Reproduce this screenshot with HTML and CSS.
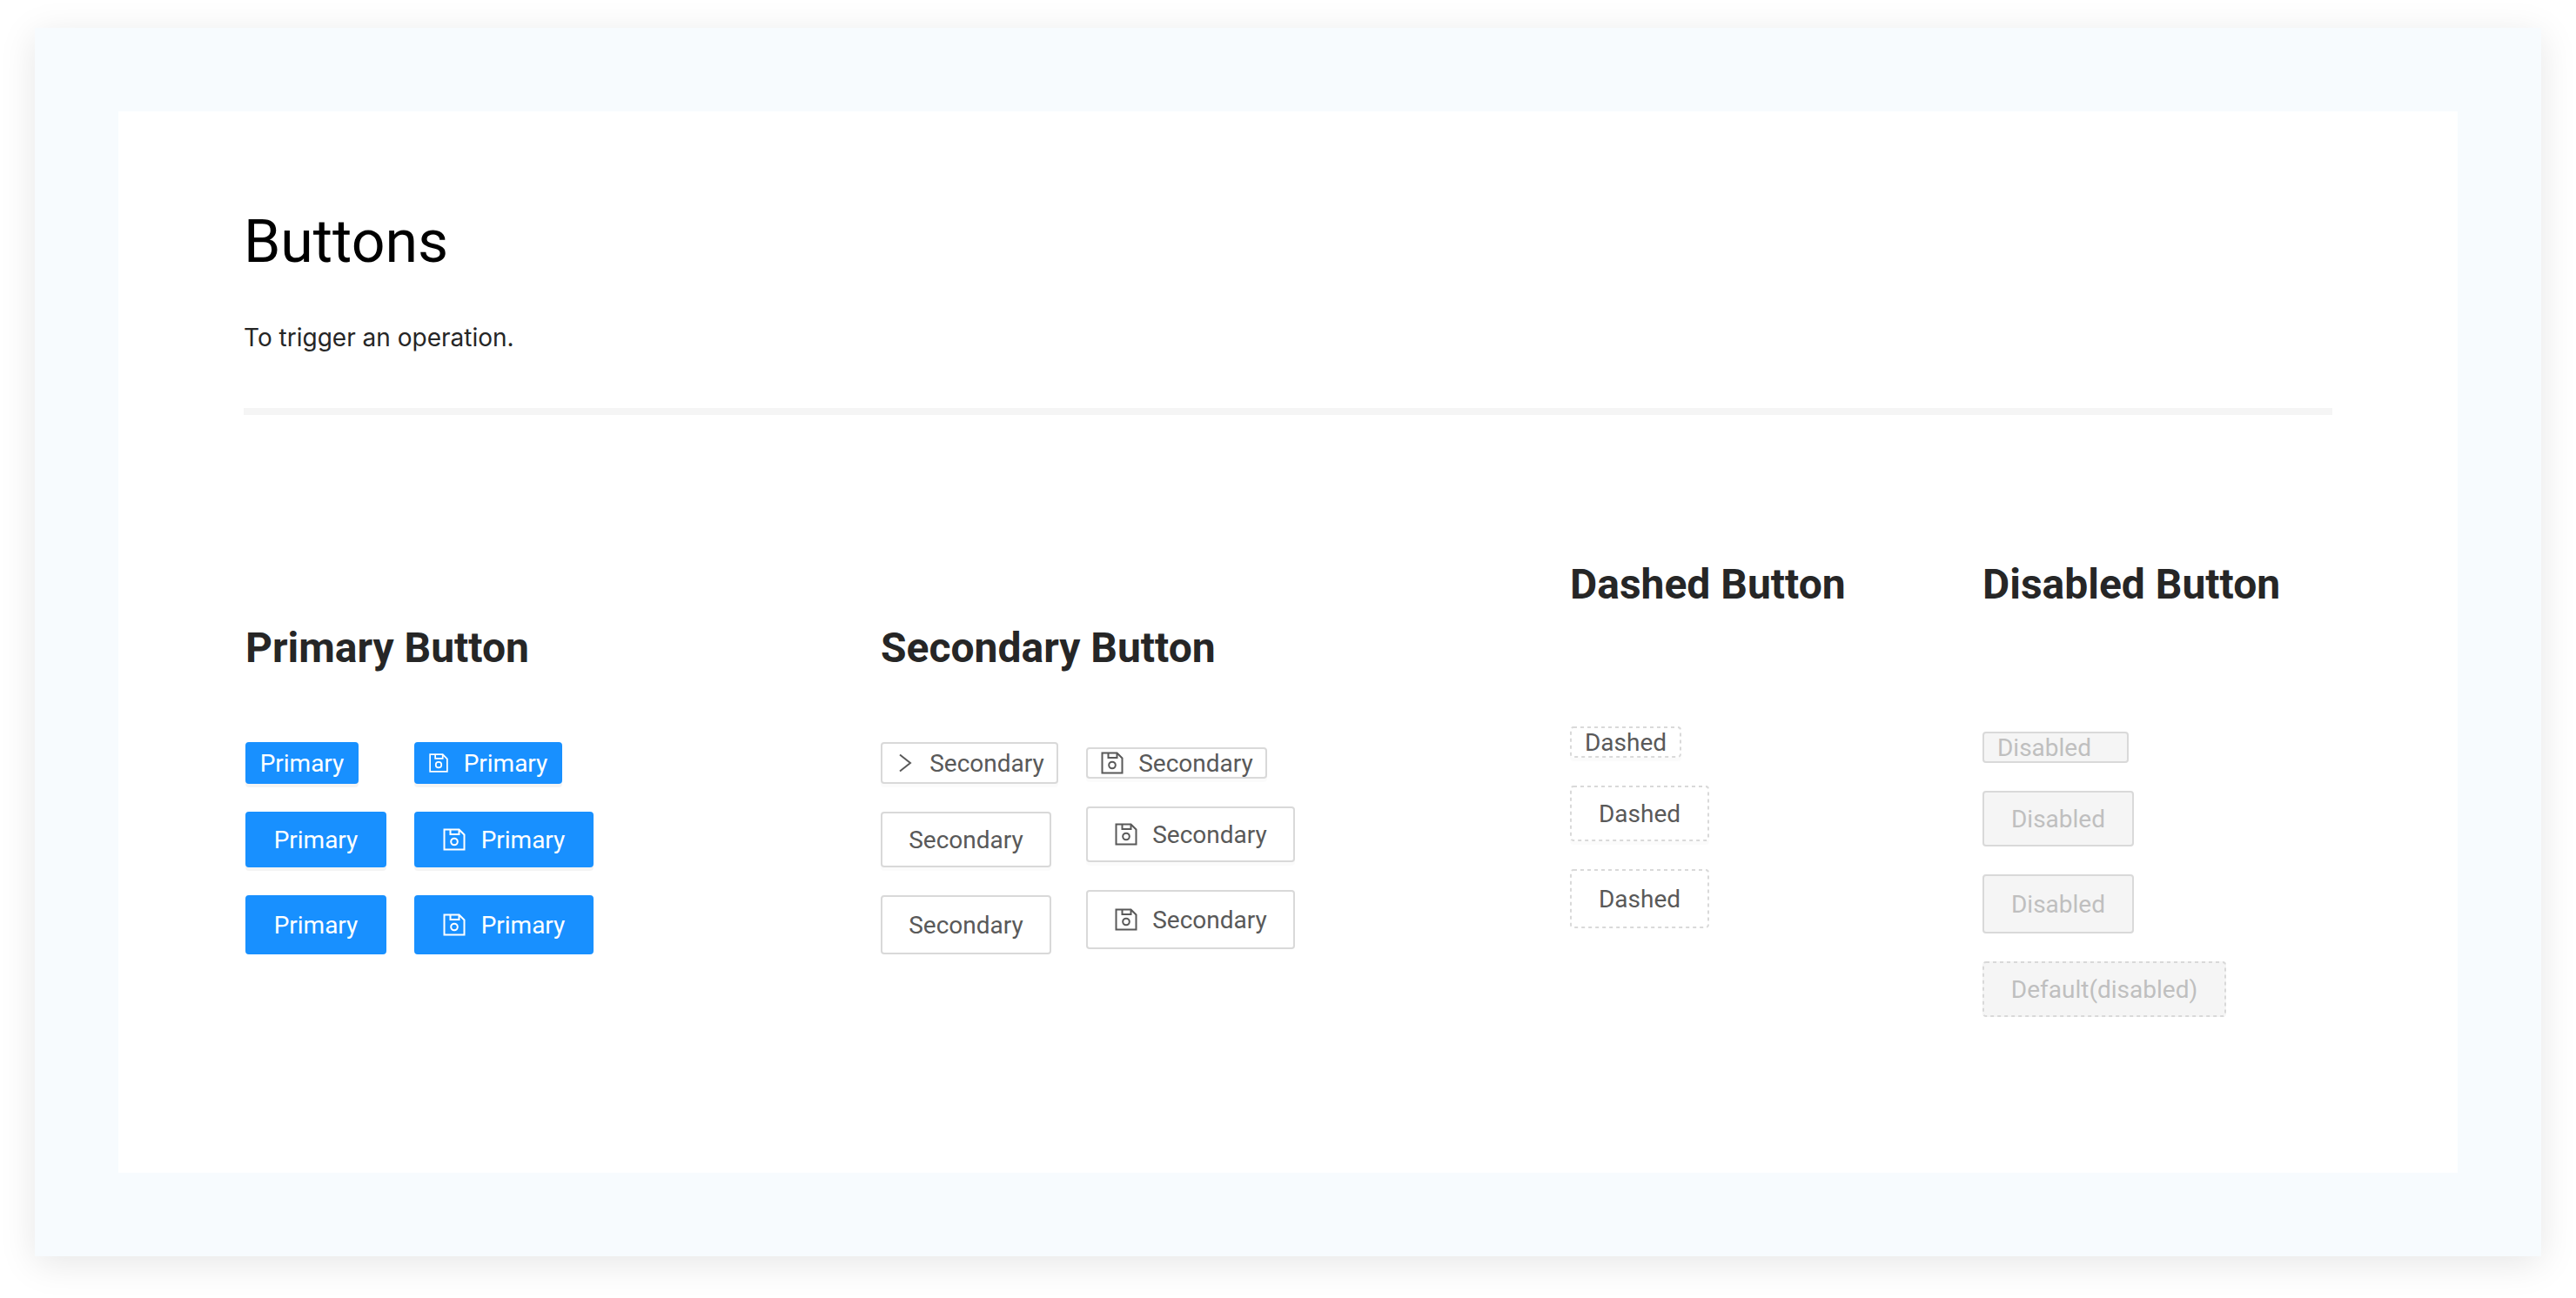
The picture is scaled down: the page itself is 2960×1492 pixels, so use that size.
FILE: index.html
```html
<!DOCTYPE html>
<html lang="en">
<head>
<meta charset="utf-8">
<meta name="viewport" content="width=device-width, initial-scale=1">
<title>Buttons</title>
<link rel="stylesheet" href="styles.css">
</head>
<body>
<svg class="sprite" aria-hidden="true">
  <symbol id="save" viewBox="0 0 28 28">
    <path d="M2.500 2.500H19.500L25.500 8.500V25.500H2.500ZM9.500 2.500V8H19.500V2.500" fill="none" stroke="currentColor" stroke-width="2"/>
    <circle cx="14" cy="16.500" r="3.800" fill="none" stroke="currentColor" stroke-width="2"/>
  </symbol>
  <symbol id="chevron" viewBox="0 0 24 24">
    <path d="M6 2.500L18 12L6 21.500" fill="none" stroke="currentColor" stroke-width="2"/>
  </symbol>
</svg>
<main class="frame">
  <article class="panel">
    <header class="intro">
      <h1 class="intro-title">Buttons</h1>
      <p class="intro-text">To trigger an operation.</p>
    </header>
    <div class="groups">
      <section class="group group-low">
        <h2 class="group-title">Primary Button</h2>
        <div class="stacks">
          <div class="stack">
            <button class="btn primary short"><span class="label">Primary</span></button>
            <button class="btn primary medium"><span class="label">Primary</span></button>
            <button class="btn primary large"><span class="label">Primary</span></button>
          </div>
          <div class="stack">
            <button class="btn primary short"><svg class="icon icon-small"><use href="#save"/></svg><span class="label">Primary</span></button>
            <button class="btn primary medium"><svg class="icon"><use href="#save"/></svg><span class="label">Primary</span></button>
            <button class="btn primary large"><svg class="icon"><use href="#save"/></svg><span class="label">Primary</span></button>
          </div>
        </div>
      </section>
      <section class="group group-low">
        <h2 class="group-title">Secondary Button</h2>
        <div class="stacks">
          <div class="stack">
            <button class="btn secondary short"><svg class="icon icon-small"><use href="#chevron"/></svg><span class="label">Secondary</span></button>
            <button class="btn secondary medium"><span class="label">Secondary</span></button>
            <button class="btn secondary large"><span class="label">Secondary</span></button>
          </div>
          <div class="stack">
            <button class="btn secondary tiny"><svg class="icon"><use href="#save"/></svg><span class="label">Secondary</span></button>
            <button class="btn secondary medium"><svg class="icon"><use href="#save"/></svg><span class="label">Secondary</span></button>
            <button class="btn secondary large"><svg class="icon"><use href="#save"/></svg><span class="label">Secondary</span></button>
          </div>
        </div>
      </section>
      <section class="group group-high">
        <h2 class="group-title">Dashed Button</h2>
        <div class="stack">
          <button class="btn dashed tiny"><svg class="outline"><rect x="1" y="1" rx="3"/></svg><span class="label">Dashed</span></button>
          <button class="btn dashed medium"><svg class="outline"><rect x="1" y="1" rx="3"/></svg><span class="label">Dashed</span></button>
          <button class="btn dashed large"><svg class="outline"><rect x="1" y="1" rx="3"/></svg><span class="label">Dashed</span></button>
        </div>
      </section>
      <section class="group group-high">
        <h2 class="group-title">Disabled Button</h2>
        <div class="stack stack-spaced">
          <button class="btn disabled tiny wide" disabled><span class="label">Disabled</span></button>
          <button class="btn disabled medium" disabled><span class="label">Disabled</span></button>
          <button class="btn disabled large" disabled><span class="label">Disabled</span></button>
          <button class="btn dashed off medium" disabled><svg class="outline"><rect x="1" y="1" rx="3"/></svg><span class="label">Default(disabled)</span></button>
        </div>
      </section>
    </div>
  </article>
</main>
</body>
</html>
```
FILE: styles.css
```css
* {
  box-sizing: border-box;
}

body {
  margin: 0;
  padding: 32px 40px 48px;
  background: #fff;
  color: #262626;
  font-family: Roboto, "Liberation Sans", sans-serif;
  font-size: 28px;
}

h1, h2, p {
  margin: 0;
}

.sprite {
  display: none;
}

.frame {
  padding: 96px;
  background: #f7fbfe;
  box-shadow: 0 8px 40px rgba(0, 0, 0, 0.1);
}

.panel {
  padding: 104px 144px 179px;
  background: #fff;
}

.intro {
  border-bottom: 8px solid #f5f5f5;
  padding-bottom: 61px;
}

.intro-title {
  color: #000;
  font-size: 68px;
  font-weight: 400;
  line-height: 92px;
}

.intro-text {
  margin-top: 44px;
  font-family: Inter, "Liberation Sans", sans-serif;
  line-height: 40px;
}

.groups {
  display: grid;
  grid-template-columns: 730fr 792fr 474fr 402fr;
  padding-left: 2px;
}

.group {
  display: flex;
  flex-direction: column;
  align-items: flex-start;
}

.group-low {
  padding-top: 240px;
  gap: 80px;
}

.group-high {
  padding-top: 167px;
  gap: 135px;
}

.group-title {
  font-size: 48px;
  font-weight: 700;
  line-height: 56px;
}

.stacks {
  display: flex;
  align-items: center;
  gap: 32px;
}

.group-low .stack + .stack {
  min-width: 206px;
}

.stack {
  display: flex;
  flex-direction: column;
  align-items: flex-start;
  gap: 32px;
}

.stack-spaced {
  padding-top: 6px;
}

.btn {
  position: relative;
  display: flex;
  align-items: center;
  justify-content: center;
  gap: 16px;
  padding: 0 30px;
  border: 2px solid transparent;
  border-radius: 4px;
  background: #fff;
  color: #595959;
  font: inherit;
  line-height: 30px;
  white-space: nowrap;
}

.tiny {
  height: 36px;
  padding: 0 14px;
}

.short {
  height: 48px;
  padding: 0 14px;
}

.medium {
  height: 64px;
}

.large {
  height: 68px;
}

.primary {
  border-color: #1890ff;
  background: #1890ff;
  color: #fff;
  box-shadow: 0 4px 0 rgba(0, 0, 0, 0.043);
}

.secondary {
  border-color: #d9d9d9;
}

.secondary, .dashed {
  box-shadow: 0 4px 0 rgba(0, 0, 0, 0.016);
}

.large, .off {
  box-shadow: none;
}

.disabled {
  border-color: #d9d9d9;
}

.disabled, .off {
  background: #f5f5f5;
  color: #bfbfbf;
}

.label {
  padding-top: 2px;
  text-align: center;
}

.primary .label {
  min-width: 98px;
}

.secondary .label {
  min-width: 132px;
}

.dashed .label {
  min-width: 96px;
}

.disabled .label {
  min-width: 110px;
}

.off .label {
  min-width: 216px;
}

.wide {
  min-width: 168px;
  justify-content: flex-start;
}

.icon {
  flex: none;
  width: 28px;
  height: 28px;
}

.icon-small {
  width: 24px;
  height: 24px;
}

.outline {
  position: absolute;
  inset: -2px;
  width: calc(100% + 4px);
  height: calc(100% + 4px);
}

.outline rect {
  width: calc(100% - 2px);
  height: calc(100% - 2px);
  fill: none;
  stroke: #d9d9d9;
  stroke-width: 2px;
  stroke-dasharray: 4px 4px;
}
```
